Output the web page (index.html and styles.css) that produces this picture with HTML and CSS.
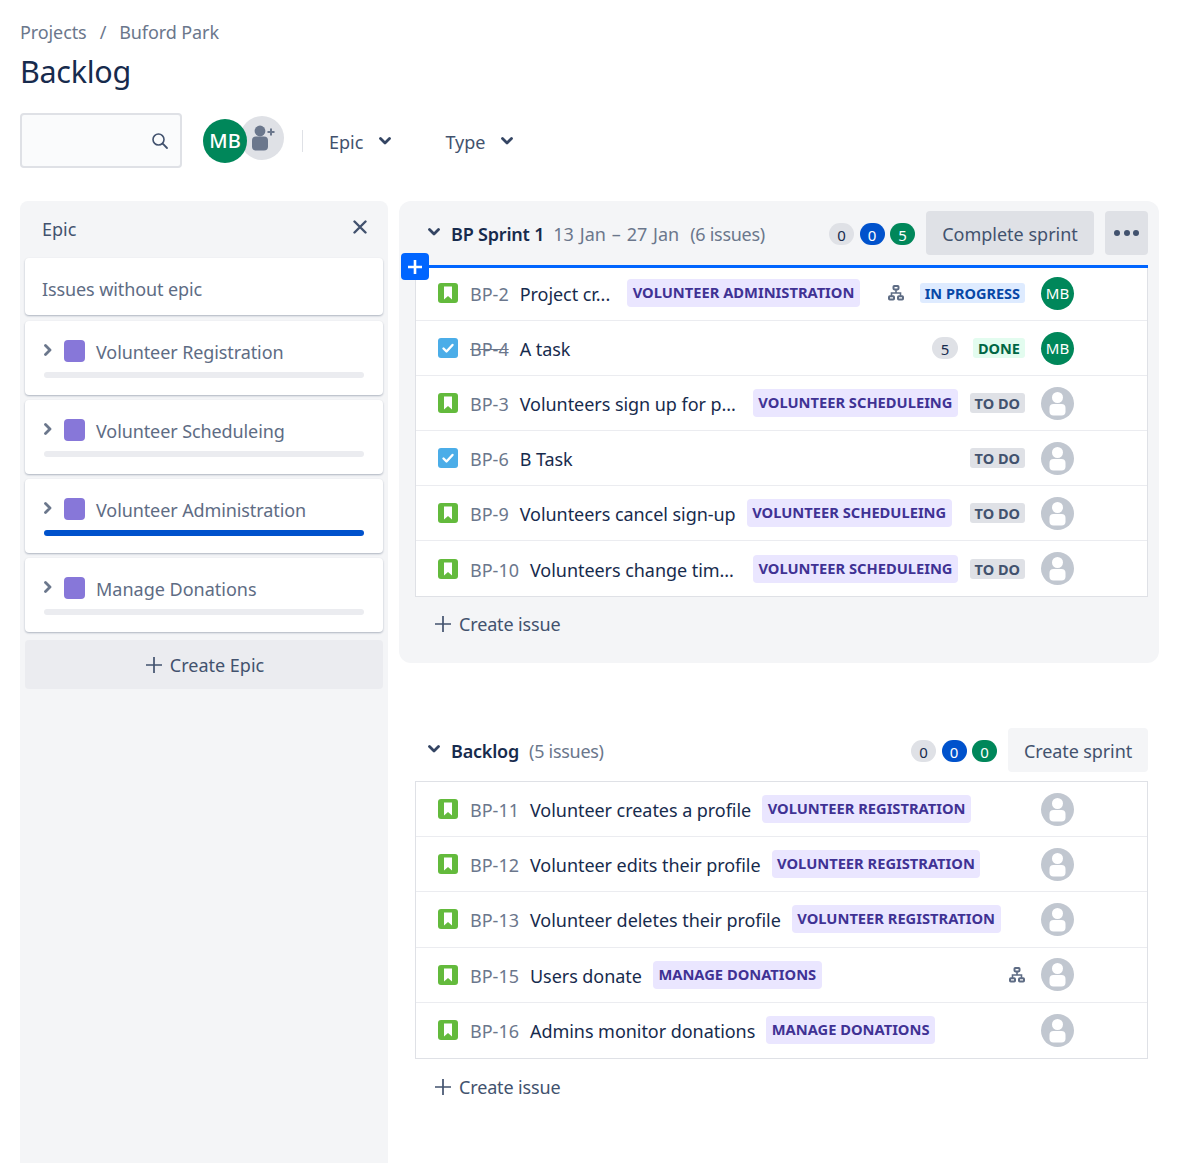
FILE: index.html
```html
<!DOCTYPE html>
<html lang="en">
<head>
  <meta charset="UTF-8">
  <title>Backlog</title>
  <link rel="stylesheet" href="styles.css">
</head>
<body>
  <svg class="sprite" width="0" height="0">
    <symbol id="story" viewBox="0 0 20 20">
      <rect width="20" height="20" rx="3" fill="#63ba3c"/>
      <path d="M6 3.500h8v13l-4-3.500-4 3.500z" fill="#fff"/>
    </symbol>
    <symbol id="task" viewBox="0 0 20 20">
      <rect width="20" height="20" rx="3" fill="#4bade8"/>
      <path d="M5.500 10.500l3 3 6-6.500" fill="none" stroke="#fff" stroke-width="2.400" stroke-linecap="round" stroke-linejoin="round"/>
    </symbol>
    <symbol id="tree" viewBox="0 0 16 16">
      <g fill="none" stroke="#5e6c84" stroke-width="2">
        <rect x="5.500" y="1" width="5" height="3.400" rx=".8"/>
        <rect x="1" y="11.200" width="5" height="3.400" rx=".8"/>
        <rect x="10" y="11.200" width="5" height="3.400" rx=".8"/>
        <path d="M8 4.400v3.600M3.500 11.200V8h9v3.200" stroke-width="1.600"/>
      </g>
    </symbol>
    <symbol id="nobody" viewBox="0 0 33 33">
      <circle cx="16.500" cy="16.500" r="16.500" fill="#c1c7d0"/>
      <rect x="8.500" y="17" width="16" height="11.500" rx="4" fill="#fff"/>
      <circle cx="16.500" cy="10.500" r="5.500" fill="#fff"/>
    </symbol>
    <symbol id="down" viewBox="0 0 12 8">
      <path d="M1.500 1.500L6 6l4.500-4.500" fill="none" stroke="#344563" stroke-width="2.800" stroke-linecap="round" stroke-linejoin="round"/>
    </symbol>
    <symbol id="right" viewBox="0 0 8 12">
      <path d="M1.500 1.500L6 6l-4.500 4.500" fill="none" stroke="#6b778c" stroke-width="2.800" stroke-linecap="round" stroke-linejoin="round"/>
    </symbol>
    <symbol id="plus" viewBox="0 0 16 16">
      <path d="M8 0v16M0 8h16" stroke="#42526e" stroke-width="1.700"/>
    </symbol>
  </svg>

  <div class="breadcrumbs"><span>Projects</span><span class="slash">/</span><span>Buford Park</span></div>
  <h1>Backlog</h1>

  <div class="toolbar">
    <div class="search">
      <svg width="18" height="18" viewBox="0 0 18 18"><circle cx="7.500" cy="7.500" r="5.500" fill="none" stroke="#42526e" stroke-width="1.600"/><path d="M11.700 11.700l4.300 4.300" stroke="#42526e" stroke-width="1.800" stroke-linecap="round"/></svg>
    </div>
    <div class="people">
      <div class="avatar-big">MB</div>
      <div class="avatar-add">
        <svg width="26" height="26" viewBox="0 0 26 26"><circle cx="11" cy="6" r="5.400" fill="#6b778c"/><rect x="3" y="11.500" width="16" height="14" rx="4" fill="#6b778c"/><path d="M22 3.500v7M18.500 7h7" stroke="#6b778c" stroke-width="2"/></svg>
      </div>
    </div>
    <div class="divider"></div>
    <div class="filter epic-filter"><span>Epic</span> <svg width="12" height="8"><use href="#down"/></svg></div>
    <div class="filter"><span>Type</span> <svg width="12" height="8"><use href="#down"/></svg></div>
  </div>

  <div class="columns">
    <div class="epics">
      <div class="epics-head">
        <span class="epics-label">Epic</span>
        <svg class="close" width="14" height="14" viewBox="0 0 14 14"><path d="M1.500 1.500l11 11M12.500 1.500l-11 11" stroke="#42526e" stroke-width="2.400" stroke-linecap="round"/></svg>
      </div>
      <div class="epic-card no-epic">Issues without epic</div>
      <div class="epic-card">
        <div class="epic-title"><svg class="arrow" width="8" height="12"><use href="#right"/></svg><i class="swatch"></i><span>Volunteer Registration</span></div>
        <div class="bar"></div>
      </div>
      <div class="epic-card">
        <div class="epic-title"><svg class="arrow" width="8" height="12"><use href="#right"/></svg><i class="swatch"></i><span>Volunteer Scheduleing</span></div>
        <div class="bar"></div>
      </div>
      <div class="epic-card">
        <div class="epic-title"><svg class="arrow" width="8" height="12"><use href="#right"/></svg><i class="swatch"></i><span>Volunteer Administration</span></div>
        <div class="bar bar-full"></div>
      </div>
      <div class="epic-card">
        <div class="epic-title"><svg class="arrow" width="8" height="12"><use href="#right"/></svg><i class="swatch"></i><span class="epic-donations">Manage Donations</span></div>
        <div class="bar"></div>
      </div>
      <div class="create-epic"><svg width="16" height="16"><use href="#plus"/></svg><span>Create Epic</span></div>
    </div>

    <div class="right-col">
      <div class="sprint">
        <div class="list-head">
          <svg class="caret" width="12" height="8"><use href="#down"/></svg>
          <span class="list-name">BP Sprint 1</span>
          <span class="list-date">13 Jan – 27 Jan</span>
          <span class="list-meta">(6 issues)</span>
          <div class="counts">
            <span class="count grey">0</span><span class="count blue">0</span><span class="count green">5</span>
          </div>
          <button class="btn complete">Complete sprint</button>
          <button class="btn more"><i></i><i></i><i></i></button>
        </div>
        <div class="drop-line"><div class="add-btn"><svg width="16" height="16" viewBox="0 0 16 16"><path d="M8 1v14M1 8h14" stroke="#fff" stroke-width="2.600"/></svg></div></div>
        <div class="issues in-sprint">
          <div class="issue">
            <svg class="type" width="20" height="20"><use href="#story"/></svg>
            <span class="key">BP-2</span><span class="summary">Project cr...</span><span class="tag tag-far">VOLUNTEER ADMINISTRATION</span>
            <div class="issue-right"><svg class="tree" width="16" height="16"><use href="#tree"/></svg><span class="status progress">IN PROGRESS</span><div class="avatar">MB</div></div>
          </div>
          <div class="issue">
            <svg class="type" width="20" height="20"><use href="#task"/></svg>
            <span class="key struck">BP-4</span><span class="summary">A task</span>
            <div class="issue-right"><span class="points">5</span><span class="status done">DONE</span><div class="avatar">MB</div></div>
          </div>
          <div class="issue">
            <svg class="type" width="20" height="20"><use href="#story"/></svg>
            <span class="key">BP-3</span><span class="summary">Volunteers sign up for p...</span><span class="tag tag-far">VOLUNTEER SCHEDULEING</span>
            <div class="issue-right"><span class="status todo">TO DO</span><svg width="33" height="33"><use href="#nobody"/></svg></div>
          </div>
          <div class="issue">
            <svg class="type" width="20" height="20"><use href="#task"/></svg>
            <span class="key">BP-6</span><span class="summary">B Task</span>
            <div class="issue-right"><span class="status todo">TO DO</span><svg width="33" height="33"><use href="#nobody"/></svg></div>
          </div>
          <div class="issue">
            <svg class="type" width="20" height="20"><use href="#story"/></svg>
            <span class="key">BP-9</span><span class="summary">Volunteers cancel sign-up</span><span class="tag">VOLUNTEER SCHEDULEING</span>
            <div class="issue-right"><span class="status todo">TO DO</span><svg width="33" height="33"><use href="#nobody"/></svg></div>
          </div>
          <div class="issue">
            <svg class="type" width="20" height="20"><use href="#story"/></svg>
            <span class="key">BP-10</span><span class="summary">Volunteers change tim...</span><span class="tag tag-wide">VOLUNTEER SCHEDULEING</span>
            <div class="issue-right"><span class="status todo">TO DO</span><svg width="33" height="33"><use href="#nobody"/></svg></div>
          </div>
        </div>
        <div class="create-issue"><svg width="16" height="16"><use href="#plus"/></svg><span>Create issue</span></div>
      </div>

      <div class="backlog">
        <div class="list-head">
          <svg class="caret" width="12" height="8"><use href="#down"/></svg>
          <span class="list-name">Backlog</span>
          <span class="list-meta">(5 issues)</span>
          <div class="counts">
            <span class="count grey">0</span><span class="count blue">0</span><span class="count green">0</span>
          </div>
          <button class="btn light">Create sprint</button>
        </div>
        <div class="issues bordered">
          <div class="issue">
            <svg class="type" width="20" height="20"><use href="#story"/></svg>
            <span class="key">BP-11</span><span class="summary">Volunteer creates a profile</span><span class="tag">VOLUNTEER REGISTRATION</span>
            <div class="issue-right"><svg width="33" height="33"><use href="#nobody"/></svg></div>
          </div>
          <div class="issue">
            <svg class="type" width="20" height="20"><use href="#story"/></svg>
            <span class="key">BP-12</span><span class="summary">Volunteer edits their profile</span><span class="tag">VOLUNTEER REGISTRATION</span>
            <div class="issue-right"><svg width="33" height="33"><use href="#nobody"/></svg></div>
          </div>
          <div class="issue">
            <svg class="type" width="20" height="20"><use href="#story"/></svg>
            <span class="key">BP-13</span><span class="summary">Volunteer deletes their profile</span><span class="tag">VOLUNTEER REGISTRATION</span>
            <div class="issue-right"><svg width="33" height="33"><use href="#nobody"/></svg></div>
          </div>
          <div class="issue">
            <svg class="type" width="20" height="20"><use href="#story"/></svg>
            <span class="key">BP-15</span><span class="summary">Users donate</span><span class="tag">MANAGE DONATIONS</span>
            <div class="issue-right"><svg class="tree" width="16" height="16"><use href="#tree"/></svg><svg width="33" height="33"><use href="#nobody"/></svg></div>
          </div>
          <div class="issue">
            <svg class="type" width="20" height="20"><use href="#story"/></svg>
            <span class="key">BP-16</span><span class="summary">Admins monitor donations</span><span class="tag">MANAGE DONATIONS</span>
            <div class="issue-right"><svg width="33" height="33"><use href="#nobody"/></svg></div>
          </div>
        </div>
        <div class="create-issue"><svg width="16" height="16"><use href="#plus"/></svg><span>Create issue</span></div>
      </div>
    </div>
  </div>
</body>
</html>
```

FILE: styles.css
```css
html, body {
  height: 1163px;
  overflow: hidden;
}

body {
  margin: 0;
  padding: 20px 38px 0 20px;
  box-sizing: border-box;
  font-family: "Noto Sans", "Open Sans", sans-serif;
  font-size: 18px;
  color: #172b4d;
  background-color: #fff;
}

.sprite {
  position: absolute;
}

.breadcrumbs {
  display: flex;
  gap: 13px;
  height: 25px;
  line-height: 25px;
  color: #6b778c;
  letter-spacing: -0.1px;
}

h1 {
  margin: 6px 0 0;
  font-size: 30.5px;
  font-weight: 400;
  line-height: 40px;
  color: #172b4d;
  letter-spacing: -0.3px;
}

.toolbar {
  display: flex;
  align-items: center;
  height: 55px;
  margin-top: 22px;
}

.search {
  display: flex;
  align-items: center;
  justify-content: flex-end;
  box-sizing: border-box;
  width: 162px;
  height: 55px;
  padding-right: 11px;
  background-color: #fafbfc;
  border: 2px solid #dfe1e6;
  border-radius: 4px;
}

.people {
  display: flex;
  margin-left: 21px;
}

.avatar-big {
  position: relative;
  z-index: 1;
  width: 44px;
  height: 44px;
  line-height: 44px;
  text-align: center;
  border-radius: 50%;
  background-color: #00875a;
  color: #fff;
  font-size: 20px;
  font-weight: 500;
}

.avatar-add {
  display: flex;
  align-items: center;
  justify-content: center;
  width: 44px;
  height: 44px;
  margin: -3px 0 0 -7px;
  border-radius: 50%;
  background-color: #dfe1e6;
}

.divider {
  width: 1px;
  height: 22px;
  margin-left: 18px;
  background-color: #dfe1e6;
}

.filter {
  display: flex;
  align-items: center;
  gap: 16px;
  color: #42526e;
}

.filter span {
  padding-top: 2px;
}

.epic-filter {
  margin-left: 26px;
  margin-right: 54px;
}

.columns {
  display: flex;
  gap: 11px;
  margin-top: 33px;
  align-items: flex-start;
}

.epics {
  box-sizing: border-box;
  width: 368px;
  height: 962px;
  padding: 0 5px;
  background-color: #f4f5f7;
  border-radius: 8px 8px 0 0;
}

.epics-head {
  display: flex;
  align-items: center;
  justify-content: space-between;
  height: 57px;
  padding: 0 16px 0 17px;
  color: #42526e;
}

.epics-label {
  margin-top: -2px;
}

.close {
  margin-top: -5px;
}

.epic-card {
  box-sizing: border-box;
  height: 73.5px;
  margin-bottom: 5.5px;
  padding: 19px 19px 0;
  background-color: #fff;
  border-radius: 4px;
  box-shadow: 0 1px 2px rgba(9, 30, 66, 0.3);
  color: #5e6c84;
  letter-spacing: -0.1px;
}

.no-epic {
  height: 57px;
  margin-bottom: 6px;
  padding: 19px 17px 0;
  line-height: 25px;
}

.epic-title {
  display: flex;
  align-items: center;
  height: 24px;
  line-height: 24px;
}

.epic-donations {
  letter-spacing: 0;
}

.arrow {
  margin-top: -4px;
}

.swatch {
  width: 21px;
  height: 22px;
  margin: -2px 11px 0 12px;
  background-color: #8777d9;
  border-radius: 4px;
}

.bar {
  height: 6px;
  margin-top: 8px;
  background-color: #ebecf0;
  border-radius: 3px;
}

.bar-full {
  background-color: #0052cc;
}

.create-epic {
  display: flex;
  align-items: center;
  justify-content: center;
  gap: 8px;
  height: 49px;
  margin-top: 8.5px;
  padding-left: 2px;
  background-color: #ebecf0;
  border-radius: 4px;
  color: #42526e;
}

.right-col {
  width: 760px;
}

.sprint {
  box-sizing: border-box;
  height: 462px;
  padding: 10px 11px 0 16px;
  background-color: #f4f5f7;
  border-radius: 12px;
  position: relative;
}

.list-head {
  display: flex;
  align-items: center;
  height: 44px;
  padding-left: 13px;
}

.caret {
  margin: -3px 11px 0 0;
}

.list-name {
  padding-top: 2px;
  font-weight: 600;
  margin-right: 9px;
  letter-spacing: -0.2px;
}

.list-date {
  padding-top: 2px;
  color: #6b778c;
  margin-right: 11px;
  word-spacing: 1.2px;
}

.list-meta {
  padding-top: 2px;
  color: #6b778c;
  letter-spacing: -0.3px;
}

.backlog .list-name {
  margin-right: 10px;
}

.counts {
  display: flex;
  gap: 5.5px;
  margin-left: auto;
  margin-right: 11px;
}

.count {
  width: 25px;
  height: 22px;
  margin-top: 1px;
  line-height: 24px;
  border-radius: 11px;
  font-size: 15px;
  text-align: center;
}

.grey {
  background-color: #dfe1e6;
  color: #172b4d;
}

.blue {
  background-color: #0052cc;
  color: #fff;
}

.green {
  background-color: #00875a;
  color: #fff;
}

.btn {
  height: 44px;
  padding: 2px 0 0;
  border: none;
  border-radius: 4px;
  background-color: #dfe1e6;
  color: #42526e;
  font-family: inherit;
  font-size: 18px;
}

.complete {
  width: 168px;
}

.light {
  width: 140px;
  background-color: #f4f5f7;
  letter-spacing: -0.1px;
}

.more {
  display: flex;
  align-items: center;
  justify-content: center;
  gap: 3.5px;
  width: 43px;
  margin-left: 11px;
  padding: 0;
}

.more i {
  width: 6px;
  height: 6px;
  border-radius: 50%;
  background-color: #42526e;
}

.drop-line {
  position: relative;
  height: 3px;
  margin-top: 10px;
  background-color: #0065ff;
}

.add-btn {
  position: absolute;
  left: -14px;
  top: -12px;
  display: flex;
  align-items: center;
  justify-content: center;
  width: 28px;
  height: 27px;
  background-color: #0065ff;
  border-radius: 4px;
}

.issues {
  background-color: #fff;
  border-left: 1px solid #dfe1e6;
  border-right: 1px solid #dfe1e6;
  border-bottom: 1px solid #dfe1e6;
}

.bordered {
  border-top: 1px solid #dfe1e6;
  margin-top: 9px;
}

.issue {
  display: flex;
  align-items: center;
  box-sizing: border-box;
  height: 55.2px;
  padding: 0 73px 0 22px;
  border-bottom: 1px solid #ebecf0;
}

.in-sprint .issue {
  height: 55px;
}

.in-sprint .issue:first-child {
  height: 53px;
  padding-bottom: 2px;
}

.issue:last-child {
  border-bottom: none;
}

.type {
  flex: none;
  margin-right: 12px;
}

.key {
  padding-top: 2px;
  color: #6b778c;
  margin-right: 11px;
}

.struck {
  text-decoration: line-through;
}

.summary {
  padding-top: 2px;
  color: #172b4d;
  white-space: nowrap;
  margin-right: 11px;
  letter-spacing: -0.05px;
}

.tag {
  height: 28px;
  line-height: 27px;
  padding: 0 5.5px;
  border-radius: 4px;
  background-color: #eae6ff;
  color: #403294;
  font-size: 14.7px;
  font-weight: 700;
  white-space: nowrap;
}

.tag-far {
  margin-left: 6px;
}

.tag-wide {
  margin-left: 8px;
}

.issue-right {
  display: flex;
  align-items: center;
  margin-left: auto;
}

.tree {
  margin-right: 16px;
}

.points {
  width: 26px;
  height: 22px;
  line-height: 24px;
  margin-right: 15px;
  border-radius: 11px;
  background-color: #dfe1e6;
  font-size: 15px;
  text-align: center;
}

.status {
  height: 20px;
  line-height: 20px;
  padding: 0 5px;
  margin-right: 16px;
  border-radius: 3px;
  font-size: 14.5px;
  font-weight: 700;
}

.progress {
  background-color: #deebff;
  color: #0747a6;
}

.done {
  background-color: #e3fcef;
  color: #006644;
}

.todo {
  background-color: #dfe1e6;
  color: #42526e;
}

.avatar {
  width: 33px;
  height: 33px;
  line-height: 33px;
  border-radius: 50%;
  background-color: #00875a;
  color: #fff;
  font-size: 15px;
  text-align: center;
}

.create-issue {
  display: flex;
  align-items: center;
  gap: 8px;
  height: 54px;
  padding-left: 20px;
  color: #42526e;
  letter-spacing: -0.15px;
}

.backlog .create-issue {
  height: 56px;
}

.backlog {
  box-sizing: border-box;
  margin-top: 65px;
  padding: 0 11px 0 16px;
}
```
